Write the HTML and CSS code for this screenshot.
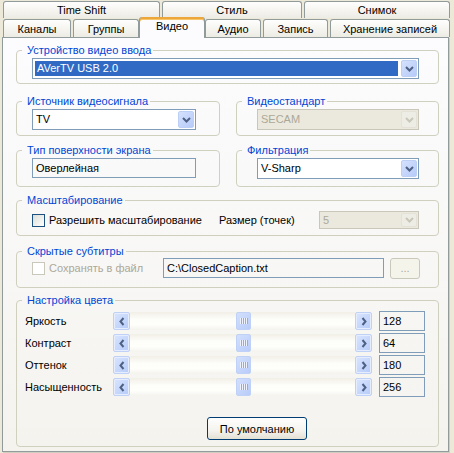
FILE: index.html
```html
<!DOCTYPE html>
<html>
<head>
<meta charset="utf-8">
<title>Видео</title>
<link rel="stylesheet" href="styles.css">
</head>
<body>
<div class="dialog">
  <div class="tabrow row1">
    <div class="tab t-timeshift">Time Shift</div>
    <div class="tab t-style">Стиль</div>
    <div class="tab t-snap">Снимок</div>
  </div>
  <div class="tabrow row2">
    <div class="tab t-chan">Каналы</div>
    <div class="tab t-groups">Группы</div>
    <div class="tab t-video sel">Видео</div>
    <div class="tab t-audio">Аудио</div>
    <div class="tab t-rec">Запись</div>
    <div class="tab t-store">Хранение записей</div>
  </div>
  <div class="panel">
    <fieldset class="group g-full g1">
      <legend>Устройство видео ввода</legend>
      <div class="content c1">
        <div class="combo w-full">
          <span class="combo-text"><span class="hl">AVerTV USB 2.0</span></span>
          <span class="combo-btn"><svg width="9" height="6" viewBox="0 0 9 6"><path d="M1 1l3.5 3.5L8 1" fill="none" stroke="#4d6185" stroke-width="2"/></svg></span>
        </div>
      </div>
    </fieldset>

    <div class="pair p2">
      <fieldset class="group g-left">
        <legend>Источник видеосигнала</legend>
        <div class="content c2 left-in">
          <div class="combo w-left">
            <span class="combo-text">TV</span>
            <span class="combo-btn"><svg width="9" height="6" viewBox="0 0 9 6"><path d="M1 1l3.5 3.5L8 1" fill="none" stroke="#4d6185" stroke-width="2"/></svg></span>
          </div>
        </div>
      </fieldset>
      <fieldset class="group g-right">
        <legend>Видеостандарт</legend>
        <div class="content c2 right-in">
          <div class="combo w-right disabled">
            <span class="combo-text">SECAM</span>
            <span class="combo-btn"><svg width="9" height="6" viewBox="0 0 9 6"><path d="M1 1l3.5 3.5L8 1" fill="none" stroke="#c9c7ba" stroke-width="2"/></svg></span>
          </div>
        </div>
      </fieldset>
    </div>

    <div class="pair p3">
      <fieldset class="group g-left">
        <legend>Тип поверхности экрана</legend>
        <div class="content c3 left-in">
          <div class="field w-left">Оверлейная</div>
        </div>
      </fieldset>
      <fieldset class="group g-right">
        <legend>Фильтрация</legend>
        <div class="content c3 right-in">
          <div class="combo w-right">
            <span class="combo-text">V-Sharp</span>
            <span class="combo-btn"><svg width="9" height="6" viewBox="0 0 9 6"><path d="M1 1l3.5 3.5L8 1" fill="none" stroke="#4d6185" stroke-width="2"/></svg></span>
          </div>
        </div>
      </fieldset>
    </div>

    <fieldset class="group g-full g4">
      <legend>Масштабирование</legend>
      <div class="content c4 row">
        <label class="check scale-check"><span class="box"></span>Разрешить масштабирование</label>
        <span class="size-label">Размер (точек)</span>
        <div class="combo w-size disabled small">
          <span class="combo-text">5</span>
          <span class="combo-btn"><svg width="9" height="6" viewBox="0 0 9 6"><path d="M1 1l3.5 3.5L8 1" fill="none" stroke="#c9c7ba" stroke-width="2"/></svg></span>
        </div>
      </div>
    </fieldset>

    <fieldset class="group g-full g5">
      <legend>Скрытые субтитры</legend>
      <div class="content c5 row">
        <label class="check cc-check off"><span class="box"></span>Сохранять в файл</label>
        <div class="field w-path">C:\ClosedCaption.txt</div>
        <div class="browse">...</div>
      </div>
    </fieldset>

    <fieldset class="group g-full g6">
      <legend>Настройка цвета</legend>
      <div class="content c6">
        <div class="slider-row">
          <span class="s-label">Яркость</span>
          <div class="scroll">
            <span class="sbtn"><svg width="6" height="9" viewBox="0 0 6 9"><path d="M4.5 1L1.5 4.5L4.5 8" fill="none" stroke="#4d6185" stroke-width="2"/></svg></span>
            <span class="track"><span class="thumb"><i></i><i></i><i></i><i></i></span></span>
            <span class="sbtn"><svg width="6" height="9" viewBox="0 0 6 9"><path d="M1.5 1L4.5 4.5L1.5 8" fill="none" stroke="#4d6185" stroke-width="2"/></svg></span>
          </div>
          <div class="val">128</div>
        </div>
        <div class="slider-row">
          <span class="s-label">Контраст</span>
          <div class="scroll">
            <span class="sbtn"><svg width="6" height="9" viewBox="0 0 6 9"><path d="M4.5 1L1.5 4.5L4.5 8" fill="none" stroke="#4d6185" stroke-width="2"/></svg></span>
            <span class="track"><span class="thumb"><i></i><i></i><i></i><i></i></span></span>
            <span class="sbtn"><svg width="6" height="9" viewBox="0 0 6 9"><path d="M1.5 1L4.5 4.5L1.5 8" fill="none" stroke="#4d6185" stroke-width="2"/></svg></span>
          </div>
          <div class="val">64</div>
        </div>
        <div class="slider-row">
          <span class="s-label">Оттенок</span>
          <div class="scroll">
            <span class="sbtn"><svg width="6" height="9" viewBox="0 0 6 9"><path d="M4.5 1L1.5 4.5L4.5 8" fill="none" stroke="#4d6185" stroke-width="2"/></svg></span>
            <span class="track"><span class="thumb"><i></i><i></i><i></i><i></i></span></span>
            <span class="sbtn"><svg width="6" height="9" viewBox="0 0 6 9"><path d="M1.5 1L4.5 4.5L1.5 8" fill="none" stroke="#4d6185" stroke-width="2"/></svg></span>
          </div>
          <div class="val">180</div>
        </div>
        <div class="slider-row">
          <span class="s-label">Насыщенность</span>
          <div class="scroll">
            <span class="sbtn"><svg width="6" height="9" viewBox="0 0 6 9"><path d="M4.5 1L1.5 4.5L4.5 8" fill="none" stroke="#4d6185" stroke-width="2"/></svg></span>
            <span class="track"><span class="thumb"><i></i><i></i><i></i><i></i></span></span>
            <span class="sbtn"><svg width="6" height="9" viewBox="0 0 6 9"><path d="M1.5 1L4.5 4.5L1.5 8" fill="none" stroke="#4d6185" stroke-width="2"/></svg></span>
          </div>
          <div class="val">256</div>
        </div>
        <button class="btn-default" type="button">По умолчанию</button>
      </div>
    </fieldset>
  </div>
</div>
</body>
</html>
```

FILE: styles.css
```css
* { box-sizing: border-box; }
html, body { margin: 0; padding: 0; }
body {
  width: 454px;
  height: 453px;
  overflow: hidden;
  background: #ece9d8;
  font-family: "Liberation Sans", Arial, sans-serif;
  font-size: 11px;
  line-height: 13px;
  color: #000;
}
.dialog { padding-top: 1px; }

/* tabs */
.tabrow { display: flex; gap: 2px; padding-left: 3px; height: 18px; }
.tab {
  border: 1px solid #919b9c;
  border-bottom: none;
  border-radius: 3px 3px 0 0;
  background: linear-gradient(#fefefd, #f4f3ee 60%, #ecebe4);
  display: flex;
  align-items: center;
  justify-content: center;
  padding-top: 1px;
  white-space: nowrap;
}
.row1 .tab { height: 17px; }
.row2 .tab { height: 18px; }
.t-timeshift { width: 157px; }
.t-style { width: 140px; }
.t-snap { width: 146px; }
.t-chan { width: 68px; }
.t-groups { width: 66px; }
.t-video { width: 62px; }
.t-audio { width: 56px; }
.t-rec { width: 65px; }
.t-store { width: 120px; }
.tab.sel {
  position: relative;
  z-index: 1;
  margin: -2px -2px 0;
  width: 66px;
  height: 21px;
  padding-top: 0;
  padding-bottom: 3px;
  background: #fcfcfe;
  border-top: none;
  box-shadow: inset 0 2px 0 #eda63a, inset 0 3px 0 #f7c66a;
}

/* panel */
.panel {
  margin-left: 2px;
  width: 447px;
  height: 415px;
  border: 1px solid #919b9c;
  box-shadow: 1px 1px 0 #d0cebf;
  background: linear-gradient(#fcfcfe, #f4f3ee);
  padding: 6px 0 0 13px;
}

.group {
  margin: 0;
  padding: 0;
  border: 1px solid #d0d0bf;
  border-radius: 4px;
  min-width: 0;
}
.group legend {
  margin-left: 5px;
  padding: 0 2px 0 5px;
  color: #0046d5;
  line-height: 13px;
}
.g-full { width: 423px; }
.pair { display: flex; gap: 16px; }
.g-left { width: 204px; }
.g-right { width: 203px; }

.p2 { margin-top: 11px; }
.p3 { margin-top: 8px; }
.g4 { margin-top: 7px; }
.g5 { margin-top: 9px; }
.g6 { margin-top: 6px; }

.content { padding-left: 15px; }
.left-in { padding-left: 15px; }
.right-in { padding-left: 20px; }
.c1 { height: 26px; padding-top: 1px; }
.c2 { height: 27px; padding-top: 1px; }
.c3 { height: 29px; padding-top: 1px; }
.c4 { height: 28px; padding-top: 4px; }
.c5 { height: 29px; padding-top: 0; }
.c6 { height: 139px; padding: 4px 0 0 8px; }

.row { display: flex; align-items: center; }
.c4.row, .c5.row { align-items: flex-start; }

/* combo */
.combo {
  display: flex;
  height: 21px;
  border: 1px solid #7f9db9;
  background: #fff;
  padding: 1px;
}
.combo-text {
  flex: 1;
  display: flex;
  align-items: center;
  padding-left: 2px;
  white-space: nowrap;
  overflow: hidden;
}
.combo .hl {
  display: flex;
  align-items: center;
  align-self: stretch;
  flex: 1;
  margin: 1px 2px 1px -1px;
  padding-left: 2px;
  background: #316ac5;
  color: #fff;
}
.combo-btn {
  width: 16px;
  flex: none;
  margin-left: 1px;
  border: 1px solid #bcd0f6;
  border-radius: 2px;
  background: linear-gradient(135deg, #d5e1fd, #b6cbf8);
  display: flex;
  align-items: center;
  justify-content: center;
}
.combo.disabled { background: #ebe9dd; border-color: #c9c7ba; color: #aca899; }
.combo.disabled .combo-btn { background: #eeede5; border-color: #e4e2d8; }
.combo.small { height: 18px; }
.w-full { width: 387px; }
.w-left { width: 164px; }
.w-right { width: 162px; }
.w-size { width: 100px; margin-top: 0; }

/* edit fields */
.field {
  height: 20px;
  border: 1px solid #7f9db9;
  display: flex;
  align-items: center;
  padding-left: 3px;
  white-space: nowrap;
}
.w-path { width: 221px; height: 20px; }

/* checkbox */
.check { display: flex; align-items: center; gap: 4px; white-space: nowrap; }
.check .box {
  width: 13px;
  height: 13px;
  border: 1px solid #1c5180;
  background: linear-gradient(135deg, #dcdcd7, #fff);
}
.check.off { color: #aca899; }
.check.off .box { border-color: #cac8bb; background: #fff; }
.scale-check { width: 187px; height: 18px; }
.size-label { width: 100px; height: 18px; display: flex; align-items: center; }
.cc-check { width: 131px; height: 20px; }
.browse {
  width: 30px;
  height: 21px;
  margin-left: 6px;
  border: 1px solid #cac8bb;
  border-radius: 3px;
  color: #aca899;
  display: flex;
  align-items: center;
  justify-content: center;
  background: #f5f4ea;
}

/* sliders */
.slider-row { display: flex; align-items: center; height: 20px; margin-bottom: 2px; }
.s-label { width: 88px; white-space: nowrap; }
.scroll { display: flex; width: 259px; height: 18px; }
.sbtn {
  width: 17px;
  flex: none;
  border: 1px solid #c0d1f7;
  border-radius: 2px;
  background: linear-gradient(135deg, #d9e5fe, #b6cbf9);
  box-shadow: inset 0 0 0 1px #e6edfd;
  display: flex;
  align-items: center;
  justify-content: center;
}
.track {
  flex: 1;
  background: linear-gradient(#f1efe6, #fdfdfa 40%, #fefefb 70%, #f4f3ee);
  padding-left: 106px;
  display: flex;
}
.thumb {
  width: 15px;
  height: 18px;
  border: 1px solid #c0d1f7;
  border-radius: 2px;
  background: linear-gradient(135deg, #d3e0fd, #b8ccf9);
  display: flex;
  align-items: center;
  justify-content: center;
}
.thumb i {
  display: block;
  width: 1px;
  height: 6px;
  background: #eef3fe;
  box-shadow: 1px 0 0 #8cacf0;
}
.thumb i + i { margin-left: 1px; }
.val {
  width: 46px;
  height: 20px;
  margin-left: 7px;
  border: 1px solid #7f9db9;
  padding-left: 3px;
  display: flex;
  align-items: center;
}
.btn-default {
  display: block;
  margin: 20px 0 0 182px;
  width: 100px;
  height: 23px;
  border: 1px solid #003c74;
  border-radius: 3px;
  background: linear-gradient(#fefefe, #f4f3ee 60%, #e3e0d4);
  font-family: inherit;
  font-size: 11px;
  color: #000;
  padding: 0;
}
```
